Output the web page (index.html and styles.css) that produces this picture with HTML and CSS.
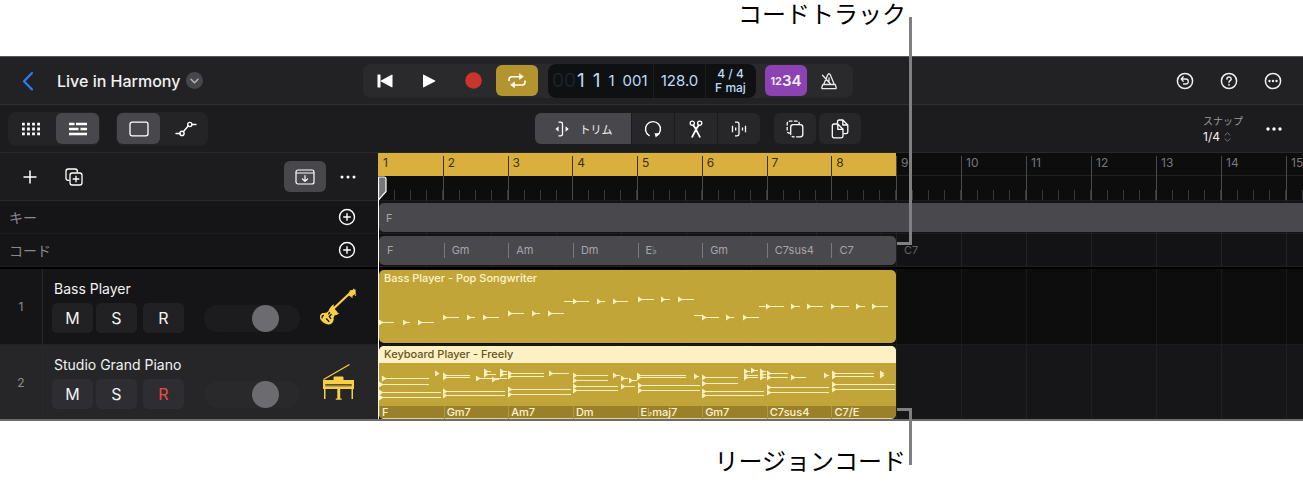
FILE: index.html
```html
<!DOCTYPE html>
<html lang="ja">
<head>
<meta charset="utf-8">
<title>Live in Harmony</title>
<link rel="stylesheet" href="styles.css">
</head>
<body>
<figure class="figure">
  <p class="caption caption-top">コードトラック</p>

  <div class="app">
    <header class="control-bar">
      <div class="project">
        <button class="icon-btn back" aria-label="戻る"><svg width="12" height="20" viewBox="0 0 12 20"><path d="M10 2 2 10.200l8 8.200" fill="none" stroke="#2f7cf6" stroke-width="2.200" stroke-linecap="round" stroke-linejoin="round"/></svg></button>
        <h1 class="project-name">Live in Harmony</h1>
        <button class="icon-btn disclosure" aria-label="メニュー"><svg width="17" height="17" viewBox="0 0 17 17"><circle cx="8.500" cy="8.500" r="8.500" fill="#47474b"/><path d="M5 7.300 8.500 10.700 12 7.300" fill="none" stroke="#b5b5b8" stroke-width="1.500" stroke-linecap="round" stroke-linejoin="round"/></svg></button>
      </div>
      <div class="transport">
        <button class="seg" aria-label="先頭へ"><svg width="16" height="14" viewBox="0 0 16 14" fill="#fff"><rect x="0.500" y="0.500" width="3" height="13" rx="0.500"/><path d="M15.500 1.200v11.600q0 .8-.8.400L4 7.500q-.7-.5 0-1L14.700.8q.8-.4.8.4z"/></svg></button>
        <button class="seg" aria-label="再生"><svg width="14" height="14" viewBox="0 0 14 14" fill="#fff"><path d="M1 1.200v11.600q0 .8.800.500L13 7.600q.8-.6 0-1.200L1.800.7Q1 .4 1 1.200z"/></svg></button>
        <button class="seg" aria-label="録音"><svg width="17" height="17" viewBox="0 0 17 17"><circle cx="8.500" cy="8.500" r="8.300" fill="#c9342c"/></svg></button>
        <button class="seg seg-cycle" aria-label="サイクル"><svg width="20" height="16" viewBox="0 0 20 16" fill="none" stroke="#fff" stroke-width="1.600" stroke-linecap="round"><path d="M2 7.500V6.500Q2 3.700 4.800 3.700H13M18 8v1.200Q18 12 15.200 12H7"/><path d="M12.500 1v5.400l3.700-2.700zM7.500 9.300v5.400L3.800 12z" fill="#fff" stroke-width=".6" stroke-linejoin="round"/></svg></button>
        <div class="lcd">
          <div class="lcd-position"><span class="lcd-dim">00</span><span class="lcd-big">1</span><span class="lcd-big">1</span><span>1</span><span>001</span></div>
          <div class="lcd-tempo">128.0</div>
          <div class="lcd-key"><span>4 / 4</span><span>F maj</span></div>
        </div>
        <button class="seg seg-count" aria-label="カウントイン 1234"><small>12</small><b>34</b></button>
        <button class="seg" aria-label="メトロノーム"><svg width="18" height="18" viewBox="0 0 18 18" fill="none" stroke="#e8e8e8" stroke-width="1.300" stroke-linecap="round" stroke-linejoin="round"><path d="M1.800 15.500 2.800 12.500H15.200L16.200 15.500Q16.400 16.700 15.500 16.700H2.500Q1.600 16.700 1.800 15.500zM3.800 12.300 7.600 3Q9 .5 10.400 3L14.200 12.300M2.500 3.200 10.500 12M9 5.800V10"/></svg></button>
      </div>
      <div class="bar-actions">
        <button class="icon-btn" aria-label="取り消す"><svg width="18" height="18" viewBox="0 0 18 18" fill="none" stroke="#eee" stroke-width="1.500" stroke-linecap="round" stroke-linejoin="round"><circle cx="9" cy="9" r="7.600"/><path d="M7.200 4.800 5.200 7l2 2.200M5.400 7h4.400a2.500 2.500 0 0 1 0 5H7.500" stroke-width="1.300"/></svg></button>
        <button class="icon-btn" aria-label="ヘルプ"><svg width="18" height="18" viewBox="0 0 18 18" fill="none" stroke="#eee" stroke-width="1.500" stroke-linecap="round"><circle cx="9" cy="9" r="7.600"/><path d="M6.900 7.100C7 4.300 11.200 4.400 11.200 6.900 11.200 8.600 9 8.600 9 10.300"/><circle cx="9" cy="12.700" r=".3"/></svg></button>
        <button class="icon-btn" aria-label="その他"><svg width="18" height="18" viewBox="0 0 18 18"><circle cx="9" cy="9" r="7.600" fill="none" stroke="#eee" stroke-width="1.500"/><g fill="#eee"><circle cx="5.500" cy="9" r="1.200"/><circle cx="9" cy="9" r="1.200"/><circle cx="12.500" cy="9" r="1.200"/></g></svg></button>
      </div>
    </header>

    <div class="toolbar">
      <div class="view-modes">
        <div class="group">
          <button class="seg" aria-label="グリッド"><svg width="18" height="14" viewBox="0 0 18 14"><path d="M0 2.200h18M0 7h18M0 11.800h18" stroke="#fff" stroke-width="2.800" stroke-dasharray="2.800 2.260"/></svg></button>
          <button class="seg is-on" aria-label="トラック"><svg width="18" height="14" viewBox="0 0 18 14"><path d="M0 2h5.500M7 2h11M0 7h9.500M11.500 7H18M0 12h18" stroke="#fff" stroke-width="2.600"/></svg></button>
        </div>
        <div class="group">
          <button class="seg is-on" aria-label="リージョン"><svg width="20" height="16" viewBox="0 0 20 16"><rect x="1" y="1.200" width="18" height="13.600" rx="2" fill="none" stroke="#fff" stroke-width="1.300"/></svg></button>
          <button class="seg" aria-label="オートメーション"><svg width="22" height="16" viewBox="0 0 22 16" fill="none" stroke="#fff" stroke-width="1.400" stroke-linecap="round"><path d="M1 12.500h4M8.300 10.800 13.200 5M16.800 3.500H21"/><circle cx="7" cy="12.400" r="2.100"/><circle cx="14.800" cy="3.500" r="2.100"/></svg></button>
        </div>
      </div>
      <div class="tools">
        <div class="tool-set">
          <button class="tool tool-wide is-on"><svg width="16" height="16" viewBox="0 0 16 16"><path d="M4.500 1.200H6.500Q8.500 1.200 8.500 3v10Q8.500 14.800 6.500 14.800H4.500" fill="none" stroke="#fff" stroke-width="1.300"/><path d="M4.600 5.300v5.400L1.500 8zM11.600 5.300v5.400L14.700 8z" fill="#fff"/></svg><span>トリム</span></button>
          <button class="tool" aria-label="ループ"><svg width="18" height="18" viewBox="0 0 18 18"><path d="M5.200 15.600A7.500 7.500 0 1 1 13 15.400" fill="none" stroke="#fff" stroke-width="1.400" stroke-linecap="round"/><path d="M10.500 13.200h5l-3.700 4.400z" fill="#fff"/></svg></button>
          <button class="tool" aria-label="分割"><svg width="14" height="18" viewBox="0 0 14 18" fill="none" stroke="#fff" stroke-width="1.300" stroke-linecap="round"><circle cx="3.300" cy="3.300" r="2.100"/><circle cx="10.700" cy="3.300" r="2.100"/><path d="M4.300 5.300 6.800 9 10.800 16.800M9.700 5.300 7.200 9 3.200 16.800" stroke-width="1.800"/></svg></button>
          <button class="tool" aria-label="伸縮"><svg width="16" height="16" viewBox="0 0 16 16" fill="none" stroke="#fff" stroke-width="1.300"><path d="M4 1.200H6.200Q8 1.200 8 3v10Q8 14.800 6.200 14.800H4M1.500 4.800v6.400M11.500 6.500v3M14.500 4.800v6.400M4.700 6.500v3"/></svg></button>
        </div>
        <div class="tool-pair">
          <button class="tool" aria-label="複数選択"><svg width="18" height="18" viewBox="0 0 18 18" fill="none" stroke="#fff" stroke-width="1.300"><path d="M4.500 13.200H3.600Q1.200 13.200 1.200 10.800V3.600Q1.200 1.200 3.600 1.200h7.200Q13.200 1.200 13.200 3.600V4.500" stroke-dasharray="3.600 1.400"/><rect x="4.700" y="4.700" width="12.100" height="12.100" rx="2.500" stroke-dasharray="26 1.500 3 1.500"/></svg></button>
          <button class="tool" aria-label="コピー"><svg width="18" height="20" viewBox="0 0 18 20" fill="none" stroke="#fff" stroke-width="1.300" stroke-linejoin="round"><path d="M6.500 4.500V2.800Q6.500 1 8.200 1H11.800L16.800 6V13Q16.800 14.700 15 14.700H12.500M11.800 1.200V6H16.600"/><path d="M3 5H6.800L12 10.300V17Q12 18.800 10.300 18.800H3Q1.300 18.800 1.300 17V6.700Q1.300 5 3 5zM6.800 5.200V10.300H11.800"/></svg></button>
        </div>
      </div>
      <div class="snap">
        <button class="snap-menu"><span class="snap-label">スナップ</span><span class="snap-value">1/4 <svg width="7" height="10" viewBox="0 0 7 10" fill="none" stroke="#77777a" stroke-width="1"><path d="M.7 3.500 3.500.8 6.300 3.500M.7 6.500 3.500 9.200 6.300 6.500"/></svg></span></button>
        <button class="icon-btn" aria-label="その他"><svg width="16" height="4" viewBox="0 0 16 4" fill="#fff"><circle cx="2" cy="2" r="1.700"/><circle cx="8" cy="2" r="1.700"/><circle cx="14" cy="2" r="1.700"/></svg></button>
      </div>
    </div>

    <main class="workspace">
      <section class="headers">
        <div class="headers-top">
          <button class="icon-btn" aria-label="トラックを追加"><svg width="14" height="14" viewBox="0 0 14 14"><path d="M7 .5v13M.5 7h13" stroke="#fff" stroke-width="1.500"/></svg></button>
          <button class="icon-btn" aria-label="トラックを複製"><svg width="18" height="18" viewBox="0 0 18 18" fill="none" stroke="#fff" stroke-width="1.300"><path d="M4.500 12.300H3.200Q1 12.300 1 10.200V3.200Q1 1 3.200 1h7Q12.300 1 12.300 3.200V4.500"/><rect x="5" y="5" width="12" height="12" rx="2.200"/><path d="M11 7.700v6.600M7.700 11h6.600"/></svg></button>
          <button class="seg is-on push" aria-label="グローバルトラック"><svg width="20" height="16" viewBox="0 0 20 16" fill="none" stroke="#fff" stroke-width="1.200" stroke-linecap="round" stroke-linejoin="round"><rect x="1" y="1" width="18" height="14" rx="2"/><path d="M1.500 4h17M10 6.500v5.800M7.500 10 10 12.400 12.500 10"/></svg></button>
          <button class="icon-btn" aria-label="その他"><svg width="16" height="4" viewBox="0 0 16 4" fill="#fff"><circle cx="2" cy="2" r="1.500"/><circle cx="8" cy="2" r="1.500"/><circle cx="14" cy="2" r="1.500"/></svg></button>
        </div>
        <div class="global-head"><span>キー</span><button class="icon-btn" aria-label="キーを追加"><svg width="18" height="18" viewBox="0 0 18 18" fill="none" stroke="#fff" stroke-width="1.400"><circle cx="9" cy="9" r="7.500"/><path d="M9 5.200v7.600M5.200 9h7.600"/></svg></button></div>
        <div class="global-head"><span>コード</span><button class="icon-btn" aria-label="コードを追加"><svg width="18" height="18" viewBox="0 0 18 18" fill="none" stroke="#fff" stroke-width="1.400"><circle cx="9" cy="9" r="7.500"/><path d="M9 5.200v7.600M5.200 9h7.600"/></svg></button></div>
        <div class="divider"></div>
        <article class="track">
          <div class="track-number">1</div>
          <div class="track-body">
            <h2 class="track-name">Bass Player</h2>
            <div class="track-controls">
              <button class="msr">M</button><button class="msr">S</button><button class="msr msr-rec">R</button>
              <input class="volume" type="range" min="0" max="100" value="70" aria-label="Bass Player 音量">
            </div>
          </div>
          <svg class="track-icon" width="38" height="38" viewBox="0 0 38 38"><path d="M13 22 30 6" stroke="#f8cf45" stroke-width="2.200"/><path d="M28.500 6.500 31.500 2.300 36.500 1.500 36.800 5.500 32 9z" fill="#f8cf45"/><path d="M31 2.500 32 4M32.500 8.500 33.500 9.500M36 6.500l1 1M34.500.8l.6 1.400" stroke="#f8cf45" stroke-width="1.300"/><path d="M11 20Q13 16.700 15 16.200 14 18.500 15.300 20.500L18.200 23.700Q18 25.200 20.300 25 18.500 27.300 15.500 27.500 14.300 29.500 14.800 31.500 13.500 36.800 9 36.500 4 35.500 1.200 31 0 26.500 3.500 25 8 25.500 9.500 23 9.800 21.300 11 20z" fill="#f8cf45"/><path d="M5 27.300Q2.500 27.500 3.200 30.300M10.800 24 9.300 26.500M12.500 26 10.300 28.500 12 31M7.200 30.500l3 3.200" stroke="#151517" stroke-width="1.300" fill="none"/></svg>
        </article>
        <article class="track is-selected">
          <div class="track-number">2</div>
          <div class="track-body">
            <h2 class="track-name">Studio Grand Piano</h2>
            <div class="track-controls">
              <button class="msr">M</button><button class="msr">S</button><button class="msr msr-rec is-armed">R</button>
              <input class="volume" type="range" min="0" max="100" value="70" aria-label="Studio Grand Piano 音量">
            </div>
          </div>
          <svg class="track-icon" width="38" height="38" viewBox="0 0 38 38"><path d="M4.500 16.500 30.500 1.500" stroke="#f8cf45" stroke-width="1.200"/><path d="M4 17h10.500v-2.500q0-1 1-1h8q1 0 1 1V17H35v4H4zM4 23.200h31V26H4zM5 20h1.500v16H5zM32.500 20H34v16h-1.500zM4 20h2v5H4zM33 20h2v5h-2zM18.300 25h2.900v10.500h1.500v1.300h-5.900v-1.300h1.500zM7 21.800h25v.6H7z" fill="#f8cf45"/></svg>
        </article>
      </section>

      <section class="timeline">
        <div class="ruler">
          <div class="loop">
            <span class="bar">1</span><span class="bar">2</span><span class="bar">3</span><span class="bar">4</span><span class="bar">5</span><span class="bar">6</span><span class="bar">7</span><span class="bar">8</span>
          </div>
          <div class="after-loop">
            <span class="bar">9</span><span class="bar">10</span><span class="bar">11</span><span class="bar">12</span><span class="bar">13</span><span class="bar">14</span><span class="bar">15</span>
          </div>
        </div>
        <div class="global-lane"><div class="key-region">F</div></div>
        <div class="global-lane">
          <div class="chord-region"><span>F</span><span>Gm</span><span>Am</span><span>Dm</span><span>E♭</span><span>Gm</span><span>C7sus4</span><span>C7</span></div>
          <span class="chord-ghost">C7</span>
        </div>
        <div class="divider"></div>
        <div class="lane">
          <div class="region">
            <div class="region-title">Bass Player - Pop Songwriter</div>
            <svg class="notes notes-bass" viewBox="0 17 517 56" data-part="bass"></svg>
          </div>
        </div>
        <div class="lane lane-selected">
          <div class="region region-selected">
            <div class="region-title">Keyboard Player - Freely</div>
            <svg class="notes notes-keys" viewBox="0 0 517 43" data-part="keys"></svg>
            <div class="region-chords"><span>F</span><span>Gm7</span><span>Am7</span><span>Dm</span><span>E♭maj7</span><span>Gm7</span><span>C7sus4</span><span>C7/E</span></div>
          </div>
        </div>
        <svg class="playhead" width="10" height="243" viewBox="0 0 10 243"><path d="M.5 1H6Q8 1 8 3V15.500L1 23.500H.5z" fill="#77777a" stroke="#fff" stroke-width="1.200"/><path d="M.5 23v220" stroke="#fff"/></svg>
      </section>
    </main>
  </div>

  <p class="caption caption-bottom">リージョンコード</p>
  <span class="leader leader-top"></span>
  <span class="leader leader-bottom"></span>
</figure>
<script src="notes.js"></script>
</body>
</html>
```
FILE: styles.css
```css
* { box-sizing: border-box; }

body {
  margin: 0;
  background: #fff;
  font-family: Inter, "DejaVu Sans", "Noto Sans CJK JP", sans-serif;
  color: #f2f2f2;
}

h1, h2, p { margin: 0; font-weight: 400; }

button {
  border: 0;
  padding: 0;
  background: none;
  color: inherit;
  font: inherit;
}

button svg { display: block; }

/* captions and leader lines */
.figure { position: relative; margin: 0; }

.caption {
  width: 906px;
  text-align: right;
  color: #000;
  font-size: 24px;
  line-height: 30px;
}
.caption-top { height: 56px; }
.caption-bottom { height: 66px; padding-top: 26px; }

.leader { position: absolute; left: 897px; width: 15px; border-right: 3px solid #808083; }
.leader-top { top: 17px; height: 228px; border-bottom: 3px solid #808083; }
.leader-bottom { top: 408px; height: 57px; border-top: 3px solid #808083; }

.app { background: #1c1c1e; border-bottom: 2px solid #6b6b6b; }

/* control bar */
.control-bar {
  display: flex;
  align-items: center;
  height: 49px;
  background: #222224;
  border-top: 1px solid #55585a;
  border-bottom: 1px solid #303033;
}
.project { display: flex; align-items: center; width: 363px; padding-left: 22px; }
.project-name { margin: 0 6px 0 23px; font-size: 16px; font-weight: 500; line-height: 20px; }
.transport {
  display: flex;
  align-items: center;
  height: 34px;
  padding-right: 2px;
  border-radius: 8px;
  background: #2a2a2d;
}
.seg {
  display: flex;
  align-items: center;
  justify-content: center;
  width: 42px;
  height: 31px;
  border-radius: 6px;
}
.transport .seg { width: 44px; }
.seg.is-on { background: #48484c; }
.transport .seg-cycle { width: 42px; margin-left: 1px; background: #b3942f; }
.transport .seg-count { width: 42px; background: #8d42b4; align-items: center; }
.seg-count small { font-size: 11px; font-weight: 600; line-height: 16px; }
.seg-count b { font-size: 15px; font-weight: 600; line-height: 16px; }

.lcd {
  display: flex;
  width: 208px;
  height: 34px;
  margin: 0 9px 0 10px;
  border-radius: 8px;
  background: #0e1012;
  color: #bcdcf5;
  font-size: 15px;
}
.lcd > div + div { border-left: 1px solid #1b1e21; }
.lcd-position { display: flex; align-items: center; gap: 8px; width: 105px; padding-left: 4px; line-height: 24px; }
.lcd-position .lcd-big { font-size: 19px; }
.lcd-dim { margin-right: -7px; color: #1e2429; font-size: 19px; }
.lcd-tempo { width: 52px; line-height: 34px; text-align: center; }
.lcd-key {
  display: flex;
  flex: 1;
  flex-direction: column;
  align-items: center;
  justify-content: center;
  padding-right: 1px;
  font-size: 12px;
  font-weight: 500;
  line-height: 14px;
}
.bar-actions { display: flex; gap: 26px; margin-left: auto; padding-right: 21px; }

/* tool bar */
.toolbar {
  display: flex;
  align-items: center;
  height: 48px;
  border-bottom: 1px solid #29292b;
}
.view-modes { display: flex; gap: 16px; width: 535px; padding-left: 8px; }
.group { display: flex; align-items: center; gap: 4px; height: 34px; padding: 0 1px; border-radius: 8px; background: #242427; }
.group .seg { width: 43px; }
.tools { display: flex; gap: 14px; }
.tool-set { display: flex; gap: 1px; overflow: hidden; border-radius: 6px; }
.tool-pair { display: flex; gap: 3px; }
.tool {
  display: flex;
  align-items: center;
  justify-content: center;
  width: 42px;
  height: 31px;
  background: #27272a;
}
.tool-pair .tool { border-radius: 6px; }
.tool-wide { gap: 10px; width: 96px; font-size: 11px; }
.tool.is-on { background: #48484c; }
.snap { display: flex; align-items: center; gap: 23px; margin-left: auto; padding-right: 21px; }
.snap-menu { text-align: left; font-size: 12px; line-height: 16px; }
.snap-label { display: block; color: #9a9a9d; font-size: 10px; }
.snap-value { display: flex; align-items: center; gap: 4px; }

/* track headers */
.workspace { display: grid; grid-template-columns: 378px minmax(0, 1fr); }
.headers { background: #151517; }
.headers-top {
  display: flex;
  align-items: center;
  height: 48px;
  padding: 0 22px 0 23px;
  background: #1c1c1e;
  border-bottom: 1px solid #2a2a2c;
}
.headers-top .icon-btn + .icon-btn { margin-left: 28px; }
.headers-top .push { margin-left: auto; margin-right: 14px; }
.global-head {
  display: flex;
  align-items: center;
  justify-content: space-between;
  height: 33px;
  padding: 0 22px 0 9px;
  border-bottom: 1px solid #1d1d1f;
  color: #8a8a8d;
  font-size: 14px;
}
.divider { height: 2px; background: #000; }

.track {
  display: grid;
  grid-template-columns: 43px 1fr auto;
  align-items: center;
  height: 76px;
  border-bottom: 1px solid #222224;
}
.track.is-selected { height: 74px; background: #262628; border-bottom: 0; }
.track-number {
  display: flex;
  align-items: center;
  justify-content: center;
  height: 100%;
  border-right: 1px solid #29292b;
  color: #8e8e91;
  font-size: 12px;
}
.track-body { align-self: start; padding: 10px 0 0 9px; }
.track-name { padding-left: 2px; font-size: 14px; line-height: 20px; }
.track-controls { display: flex; align-items: center; gap: 3px; padding-top: 4px; }
.msr { width: 41px; height: 30px; border-radius: 5px; background: #212124; font-size: 16px; }
.is-selected .msr { background: #2e2e32; }
.msr-rec { margin-left: 3px; }
.msr.is-armed { color: #ee4a3c; }
.volume {
  width: 96px;
  height: 27px;
  margin: 0 0 0 17px;
  border-radius: 14px;
  background: #1c1c1e;
  appearance: none;
}
.is-selected .volume { background: #29292c; }
.volume::-webkit-slider-thumb { appearance: none; width: 27px; height: 27px; border-radius: 50%; background: #6c6c70; }
.track-icon { margin-right: 21px; }

/* timeline */
.timeline { position: relative; overflow: hidden; background: #0d0d0e; }
.ruler { display: flex; height: 48px; border-bottom: 1px solid #1c1c1e; }
.loop {
  display: grid;
  flex: none;
  grid-template-columns: repeat(8, 1fr);
  width: 518px;
  background: linear-gradient(#d9b03d 0 23px, transparent 23px);
}
.after-loop {
  display: grid;
  flex: 1;
  grid-auto-flow: column;
  grid-auto-columns: 65px;
  background: linear-gradient(transparent 22px, #222224 22px 23px, transparent 23px);
}
.bar {
  height: 44px;
  margin-top: 3px;
  padding-left: 4px;
  border-left: 1px solid #4b4b4e;
  background: repeating-linear-gradient(90deg, transparent 0 15px, #38383a 15px 16px, transparent 16px 16px) 0 100% / 100% 10px no-repeat;
  color: #77777a;
  font-size: 12px;
  line-height: 13px;
}
.loop .bar {
  border-image: linear-gradient(#3c300d 0 20px, #4b4b4e 20px) 1;
  color: #3c300d;
}
.loop .bar:first-child { border-color: transparent; border-image: none; }

.global-lane {
  display: flex;
  align-items: center;
  height: 33px;
  padding-left: 1px;
  border-bottom: 1px solid #1f1f21;
  background: repeating-linear-gradient(90deg, #222225 0 1px, #131315 1px 65px);
  background-position: 518px 0;
  color: #a5a5a9;
  font-size: 11px;
}
.key-region {
  flex: 1;
  height: 29px;
  padding-left: 7px;
  border-radius: 5px 0 0 5px;
  background: #49494d;
  line-height: 30px;
}
.chord-region {
  display: grid;
  align-items: center;
  grid-template-columns: repeat(8, 1fr);
  width: 517px;
  height: 29px;
  border-radius: 5px;
  background: #49494d;
}
.chord-region span { padding-left: 7px; border-left: 1px solid #7a7a7e; line-height: 15px; }
.chord-region span:first-child { border-color: transparent; }
.chord-ghost { padding-left: 8px; color: #626266; line-height: 15px; }

.lane {
  height: 76px;
  padding: 1px 0 0 1px;
  border-bottom: 1px solid #1b1b1d;
  background: repeating-linear-gradient(90deg, #19191b 0 1px, #0d0d0e 1px 65px);
  background-position: 518px 0;
}
.lane-selected {
  height: 74px;
  border-bottom: 0;
  background-image: repeating-linear-gradient(90deg, #202022 0 1px, #161618 1px 65px);
}
.region {
  width: 517px;
  overflow: hidden;
  border-radius: 5px;
  background: #c2a539;
  color: #fff3cc;
  font-size: 11px;
  font-weight: 500;
}
.region-title { height: 17px; padding-left: 5px; line-height: 17px; }
.region-selected .region-title { background: #fdf0c4; color: #66551a; }
.notes { display: block; width: 517px; fill: #fff0bd; }
.notes-bass { height: 56px; }
.notes-keys { height: 43px; }
.region-chords {
  display: grid;
  grid-template-columns: repeat(8, 1fr);
  height: 13px;
  background: #9a802b;
  border-bottom: 1px solid #e8d48c;
  line-height: 13px;
}
.region-chords span { padding-left: 2px; border-left: 1px solid #b3983a; }

.playhead { position: absolute; left: 0; top: 23px; }
```
FILE: notes.js
```js
// Each note: [x, y, length, hideHead]
const parts = {
  bass: [
    [0, 52, 15], [24, 52, 7], [39, 52, 16],
    [64, 47, 16], [88, 47, 8], [104, 47, 16],
    [129, 43, 16], [153, 43, 8], [169, 43, 16],
    [185, 31, 9, true], [194, 31, 16], [218, 31, 8], [234, 31, 15],
    [259, 29, 16], [282, 29, 9], [299, 29, 16],
    [315, 45, 9, true], [323, 47, 17], [347, 47, 8], [364, 47, 16],
    [380, 36, 9, true], [387, 36, 18], [412, 36, 9], [428, 36, 16],
    [452, 36, 18], [477, 36, 9], [493, 36, 16]
  ],
  keys: [
    [3, 15, 47], [0, 21, 50], [0, 29, 62], [0, 34, 62], [56, 10, 4],
    [64, 12, 27], [64, 14, 27], [64, 28, 62], [64, 32, 62],
    [97, 15, 31], [105, 8, 7], [105, 11, 12], [113, 16, 7], [121, 8, 7], [121, 11, 7],
    [129, 10, 36], [129, 13, 36], [129, 26, 63], [129, 31, 63], [170, 10, 20],
    [194, 12, 35], [194, 17, 35], [194, 23, 45], [194, 27, 45],
    [234, 12, 7], [242, 15, 7], [242, 23, 14], [250, 17, 8],
    [258, 12, 49], [258, 14, 49], [259, 22, 62], [259, 27, 62], [315, 13, 5],
    [323, 14, 36], [323, 20, 36], [323, 28, 62], [323, 32, 62],
    [365, 8, 6], [365, 12, 14], [365, 14, 14], [372, 7, 7], [381, 8, 6], [381, 11, 6], [381, 14, 6],
    [388, 10, 21], [388, 14, 21], [388, 24, 62], [388, 29, 62], [412, 14, 15], [445, 12, 5],
    [453, 10, 42], [453, 13, 42], [453, 21, 63], [453, 26, 63], [501, 10, 3], [501, 12, 3]
  ]
};

document.querySelectorAll(".notes").forEach((svg) => {
  const d = parts[svg.dataset.part].map(([x, y, len, hideHead]) => {
    const line = `M${x} ${y}h${len}v1h-${len}z`;
    return hideHead ? line : `${line}M${x} ${y - 2.5}l4.500 3 -4.500 3z`;
  }).join("");
  const path = document.createElementNS("http://www.w3.org/2000/svg", "path");
  path.setAttribute("d", d);
  svg.append(path);
});
```
